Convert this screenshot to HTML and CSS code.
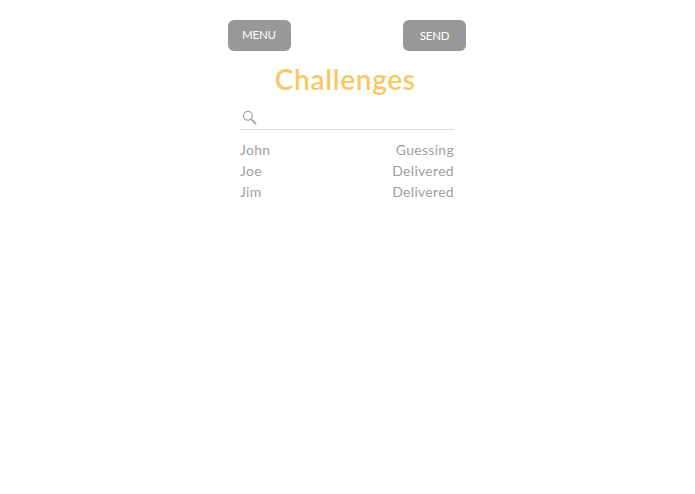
FILE: index.html
```
<!DOCTYPE html>
<html lang="en">
<head>
    <meta charset="UTF-8">
    <meta name="viewport" content="width=device-width, initial-scale=1.0">
    <title>Challenges</title>
    <link rel="stylesheet" href="styles.css">
</head>
<body>
    <div class="container">
        <div class="top-bar">
            <button class="btn btn-menu">MENU</button>
            <button class="btn btn-send">SEND</button>
        </div>

        <h1>Challenges</h1>

        <div class="search">
            <svg class="search-icon" viewBox="0 0 16 16" width="15" height="15">
                <circle cx="6.2" cy="6.2" r="4.7" fill="none" stroke="#a8a8a8" stroke-width="1.4"/>
                <path d="M9.8 9.8 L15 15" stroke="#a8a8a8" stroke-width="2" fill="none"/>
            </svg>
        </div>

        <ul class="list">
            <li class="row"><span>John</span><span>Guessing</span></li>
            <li class="row"><span>Joe</span><span>Delivered</span></li>
            <li class="row"><span>Jim</span><span>Delivered</span></li>
        </ul>
    </div>
</body>
</html>
```

FILE: styles.css
```
* {
    margin: 0;
    padding: 0;
    box-sizing: border-box;
}

body {
    font-family: 'Lato', 'Open Sans', sans-serif;
    background: #fff;
    height: 494px;
    overflow: hidden;
}

.container {
    width: 238.5px;
    margin-left: 227.5px;
    padding-top: 20px;
}

.top-bar {
    display: flex;
    justify-content: space-between;
}

.btn {
    width: 63px;
    height: 31px;
    border: none;
    border-radius: 6px;
    background: #989898;
    color: #fff;
    font-family: 'Lato', sans-serif;
    font-size: 11.5px;
    letter-spacing: -0.2px;
}

.btn-menu {
    padding-bottom: 2px;
}

h1 {
    margin-top: 11px;
    padding-right: 3px;
    text-align: center;
    color: #f7c868;
    font-family: 'Lato', sans-serif;
    font-size: 28px;
    font-weight: 600;
    line-height: 34px;
    letter-spacing: 0.7px;
}

.search {
    margin: 11px 12px 0 12.5px;
    height: 23px;
    padding: 3px 0 0 2px;
    border-bottom: 1px solid #dcdcdc;
}

.search-icon {
    display: block;
}

.list {
    list-style: none;
    margin: 9px 12px 0 12.5px;
}

.row {
    display: flex;
    justify-content: space-between;
    height: 21px;
    line-height: 21px;
    color: #a0a0a0;
    font-size: 14px;
    letter-spacing: 0.3px;
}
```
